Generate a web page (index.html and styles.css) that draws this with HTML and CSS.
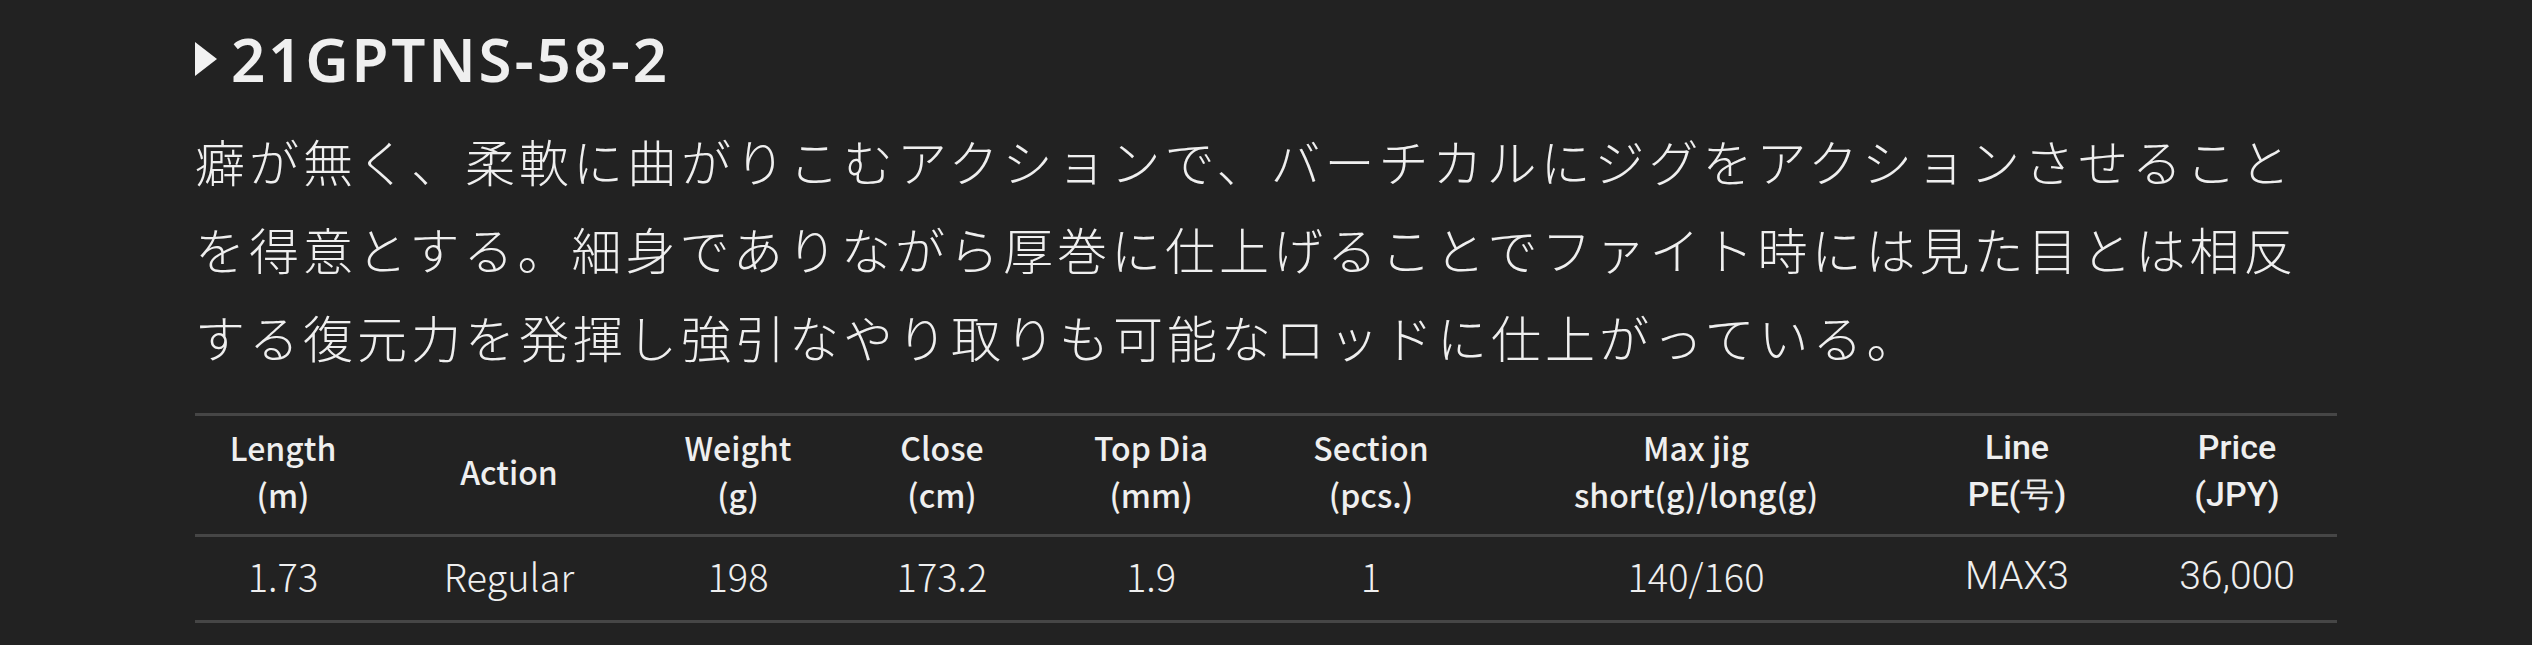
FILE: index.html
```html
<!DOCTYPE html>
<html lang="ja">
<head>
<meta charset="utf-8">
<title>21GPTNS-58-2</title>
<link rel="stylesheet" href="styles.css">
</head>
<body>
<section class="product">
  <h2 class="product-title"><span class="marker"></span><span class="name">21GPTNS-58-2</span></h2>
  <p class="product-desc">癖が無く、柔軟に曲がりこむアクションで、バーチカルにジグをアクションさせることを得意とする。細身でありながら厚巻に仕上げることでファイト時には見た目とは相反する復元力を発揮し強引なやり取りも可能なロッドに仕上がっている。</p>
  <table class="spec">
    <colgroup>
      <col class="c1"><col class="c2"><col class="c3"><col class="c4"><col class="c5"><col class="c6"><col class="c7"><col class="c8"><col class="c9">
    </colgroup>
    <thead>
      <tr>
        <th>Length<br>(m)</th>
        <th>Action</th>
        <th>Weight<br>(g)</th>
        <th>Close<br>(cm)</th>
        <th>Top Dia<br>(mm)</th>
        <th>Section<br>(pcs.)</th>
        <th>Max jig<br>short(g)/long(g)</th>
        <th class="alt">Line<br>PE(号)</th>
        <th class="alt">Price<br>(JPY)</th>
      </tr>
    </thead>
    <tbody>
      <tr>
        <td>1.73</td>
        <td>Regular</td>
        <td>198</td>
        <td>173.2</td>
        <td>1.9</td>
        <td>1</td>
        <td>140/160</td>
        <td class="alt">MAX3</td>
        <td class="alt">36,000</td>
      </tr>
    </tbody>
  </table>
</section>
</body>
</html>
```

FILE: styles.css
```css
html, body {
  margin: 0;
  padding: 0;
  background: #222222;
}

body {
  color: #efefef;
  font-family: "Noto Sans CJK JP", "Noto Sans", sans-serif;
}

.product {
  width: 2142px;
  padding: 19px 0 0 195px;
}

.product-title {
  display: flex;
  align-items: center;
  gap: 14px;
  margin: 0;
  height: 80px;
  font-family: "Noto Sans", "Noto Sans CJK JP", sans-serif;
  font-size: 60px;
  font-weight: 600;
  line-height: 80px;
  letter-spacing: 2.8px;
}

.marker {
  width: 0;
  height: 0;
  border-left: 22px solid #f2f2f2;
  border-top: 17.5px solid transparent;
  border-bottom: 17.5px solid transparent;
}

.product-desc {
  margin: 17px 0 0;
  font-size: 50px;
  font-weight: 300;
  line-height: 88px;
  letter-spacing: 4px;
}

.spec {
  width: 2142px;
  margin-top: 33px;
  border-collapse: collapse;
  table-layout: fixed;
}

.c1 { width: 176px; }
.c2 { width: 276px; }
.c3 { width: 182px; }
.c4 { width: 226px; }
.c5 { width: 192px; }
.c6 { width: 248px; }
.c7 { width: 402px; }
.c8 { width: 240px; }
.c9 { width: 200px; }

.spec th,
.spec td {
  padding: 0;
  text-align: center;
  vertical-align: middle;
  white-space: nowrap;
}

.spec thead tr {
  border-top: 3px solid #464646;
  border-bottom: 3px solid #464646;
}

.spec th {
  height: 110px;
  padding-bottom: 8px;
  font-size: 32px;
  font-weight: 500;
  line-height: 47px;
}

.spec tbody tr {
  border-bottom: 3px solid #464646;
}

.spec td {
  height: 77px;
  padding-bottom: 6px;
  font-size: 38px;
  font-weight: 300;
  line-height: 48px;
}

.spec .alt {
  font-family: "Roboto", "Liberation Sans", sans-serif;
}

.spec th.alt {
  font-weight: 500;
  font-size: 34px;
}

.spec td.alt {
  font-size: 39px;
  font-weight: 300;
}
```
